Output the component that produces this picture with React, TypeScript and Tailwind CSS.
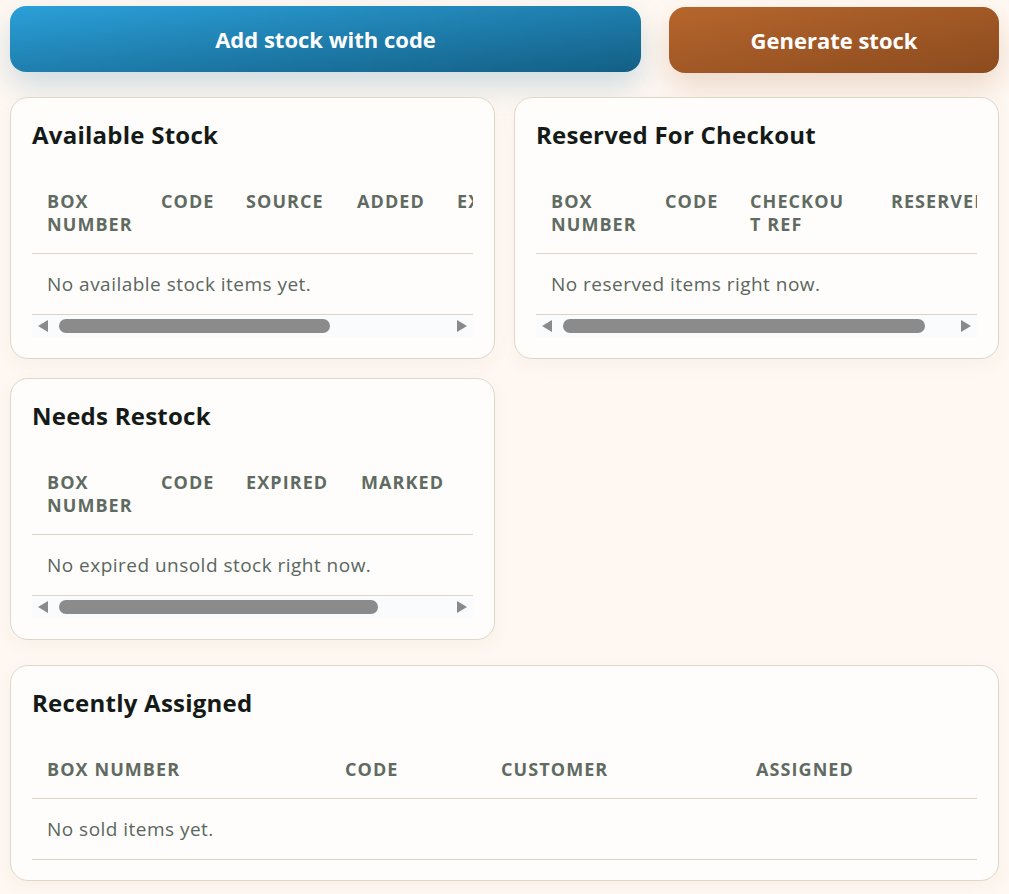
import React from 'react';

type Col = { label: string; width: number; pr?: number };

interface StockTableProps {
  columns: Col[];
  empty: string;
  tableWidth: number;
  thumb?: number;
}

const font = { fontFamily: '"Open Sans", "DejaVu Sans", sans-serif' };

const ScrollBar: React.FC<{ thumb: number }> = ({ thumb }) => (
  <div className="flex h-[22px] items-center bg-[#fafbfc]">
    <svg width="10" height="12" viewBox="0 0 10 12" className="ml-[6px] shrink-0">
      <path d="M10 0 L0 6 L10 12 Z" fill="#8a8a8a" />
    </svg>
    <div className="ml-[11px] h-[14px] shrink-0 rounded-full bg-[#8b8b8b]" style={{ width: thumb }} />
    <div className="flex-1" />
    <svg width="10" height="12" viewBox="0 0 10 12" className="mr-[6px] shrink-0">
      <path d="M0 0 L10 6 L0 12 Z" fill="#8a8a8a" />
    </svg>
  </div>
);

const StockTable: React.FC<StockTableProps> = ({ columns, empty, tableWidth, thumb }) => (
  <div>
    <div className="overflow-hidden">
      <table className="table-fixed border-collapse text-left" style={{ width: tableWidth }}>
        <thead>
          <tr className="border-b border-[#ddd4c6]">
            {columns.map((c) => (
              <th
                key={c.label}
                style={{ width: c.width, paddingRight: c.pr ?? 15 }}
                className="align-top pl-[15px] pt-[13px] pb-[17px] text-[18px] leading-[23px] font-bold uppercase tracking-[0.06em] text-[#5f6b62] break-words"
              >
                {c.label}
              </th>
            ))}
          </tr>
        </thead>
        <tbody>
          <tr className="border-b border-[#ddd4c6]">
            <td
              colSpan={columns.length}
              className="px-[15px] py-[18px] text-[19px] leading-[24px] tracking-[0.025em] text-[#5a6660]"
            >
              {empty}
            </td>
          </tr>
        </tbody>
      </table>
    </div>
    {thumb !== undefined && <ScrollBar thumb={thumb} />}
  </div>
);

const Card: React.FC<{ title: string; children: React.ReactNode; className?: string }> = ({
  title,
  children,
  className = 'pb-[21px]',
}) => (
  <section
    className={`rounded-[18px] border border-[#e0d7c9] bg-[#fffdfb] px-[21px] pt-[21px] shadow-[0_6px_18px_rgba(120,90,50,0.05)] ${className}`}
  >
    <h2 className="text-[24px] leading-[32px] font-bold tracking-[0.01em] text-[#141a17] mb-[26px]">{title}</h2>
    {children}
  </section>
);

export default function App() {
  return (
    <div className="min-h-screen bg-[#fff8f2] px-[10px] pt-[6px] pb-[12px]" style={font}>
      {/* Actions */}
      <div className="flex gap-[28px] mb-[24px]">
        <button className="w-[631px] h-[66px] rounded-[16px] bg-gradient-to-br from-[#2ba0d9] to-[#135f85] text-white text-[22px] font-bold shadow-[0_14px_30px_rgba(30,120,160,0.22)]">
          Add stock with code
        </button>
        <button className="flex-1 mt-[1px] h-[66px] rounded-[16px] bg-gradient-to-br from-[#b6662c] to-[#8c4b1f] text-white text-[22px] font-bold shadow-[0_14px_30px_rgba(160,90,40,0.2)]">
          Generate stock
        </button>
      </div>

      <div className="grid grid-cols-2 gap-x-[19px] gap-y-[19px]">
        <Card title="Available Stock">
          <StockTable
            tableWidth={650}
            thumb={271}
            empty="No available stock items yet."
            columns={[
              { label: 'Box number', width: 114, pr: 6 },
              { label: 'Code', width: 85 },
              { label: 'Source', width: 111 },
              { label: 'Added', width: 100 },
              { label: 'Expires', width: 240 },
            ]}
          />
        </Card>
        <Card title="Reserved For Checkout">
          <StockTable
            tableWidth={490}
            thumb={362}
            empty="No reserved items right now."
            columns={[
              { label: 'Box number', width: 114, pr: 6 },
              { label: 'Code', width: 85 },
              { label: 'Checkout ref', width: 141, pr: 26 },
              { label: 'Reserved', width: 150 },
            ]}
          />
        </Card>
        <Card title="Needs Restock">
          <StockTable
            tableWidth={553}
            thumb={319}
            empty="No expired unsold stock right now."
            columns={[
              { label: 'Box number', width: 114, pr: 6 },
              { label: 'Code', width: 85 },
              { label: 'Expired', width: 115 },
              { label: 'Marked', width: 239 },
            ]}
          />
        </Card>
      </div>

      <Card title="Recently Assigned" className="mt-[25px] pb-[20px]">
        <StockTable
          tableWidth={945}
          empty="No sold items yet."
          columns={[
            { label: 'Box number', width: 298 },
            { label: 'Code', width: 156 },
            { label: 'Customer', width: 255 },
            { label: 'Assigned', width: 236 },
          ]}
        />
      </Card>
    </div>
  );
}
